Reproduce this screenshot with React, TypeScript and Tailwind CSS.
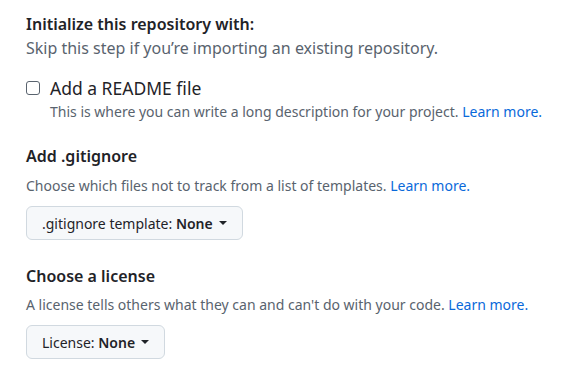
export default function App() {
  return (
    <div
      className="min-h-screen bg-white pl-[26px] pt-[12px] text-[#1f2328]"
      style={{ fontFamily: '"Noto Sans", "Open Sans", sans-serif' }}
    >
      <h3 className="text-[16px] font-semibold leading-6">Initialize this repository with:</h3>
      <p className="text-[16px] leading-6 text-[#59636e]">
        Skip this step if you’re importing an existing repository.
      </p>

      <div className="mt-[18px] flex items-start gap-[10px]">
        <span className="mt-[3px] size-[14px] rounded-[3px] border border-[#59636e] bg-white" />
        <div className="flex flex-col">
          <span className="text-[17.5px] font-normal leading-5">Add a README file</span>
          <span className="mt-[4px] text-[14px] leading-5 text-[#59636e]">
            This is where you can write a long description for your project.{" "}
            <a className="text-[#0969da]">Learn more.</a>
          </span>
        </div>
      </div>

      <h4 className="mt-[22px] text-[16px] font-semibold leading-6">Add .gitignore</h4>
      <p className="mt-[8px] text-[14px] leading-5 text-[#59636e]">
        Choose which files not to track from a list of templates.{" "}
        <a className="text-[#0969da]">Learn more.</a>
      </p>
      <button className="mt-[10px] flex h-[34px] items-center gap-1 rounded-md border border-[#d1d9e0] bg-[#f6f8fa] px-[15px] text-[14px] text-[#1f2328]">
        <span>
          .gitignore template: <span className="font-semibold">None</span>
        </span>
        <span className="ml-0.5 h-0 w-0 border-x-4 border-t-4 border-x-transparent border-t-[#1f2328]" />
      </button>

      <h4 className="mt-[24px] text-[16px] font-semibold leading-6">Choose a license</h4>
      <p className="mt-[7px] text-[14px] leading-5 text-[#59636e]">
        A license tells others what they can and can't do with your code.{" "}
        <a className="text-[#0969da]">Learn more.</a>
      </p>
      <button className="mt-[10px] flex h-[34px] items-center gap-1 rounded-md border border-[#d1d9e0] bg-[#f6f8fa] px-[15px] text-[14px] text-[#1f2328]">
        <span>
          License: <span className="font-semibold">None</span>
        </span>
        <span className="ml-0.5 h-0 w-0 border-x-4 border-t-4 border-x-transparent border-t-[#1f2328]" />
      </button>
    </div>
  );
}
